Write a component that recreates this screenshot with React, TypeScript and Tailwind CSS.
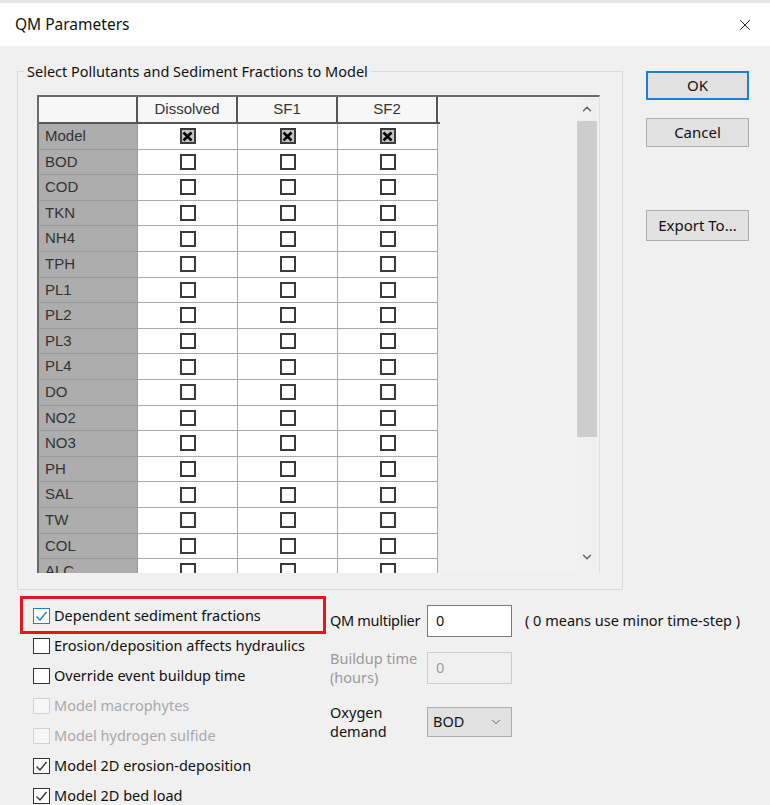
import { X, ChevronUp, ChevronDown } from 'lucide-react';

const ROWS = ['Model', 'BOD', 'COD', 'TKN', 'NH4', 'TPH', 'PL1', 'PL2', 'PL3', 'PL4', 'DO', 'NO2', 'NO3', 'PH', 'SAL', 'TW', 'COL', 'ALC'];
const COLS = ['Dissolved', 'SF1', 'SF2'];

const ui = { fontFamily: '"Noto Sans", "Open Sans", sans-serif' };
const grid = { fontFamily: '"Liberation Sans", Arial, sans-serif' };

function GridBox({ checked }: { checked: boolean }) {
  return (
    <div className={`w-[16px] h-[16px] border-[2px] border-[#3a3a3a] flex items-center justify-center ${checked ? 'bg-[#c4c4c4]' : 'bg-white'}`}>
      {checked && (
        <svg width="11" height="11" viewBox="0 0 11 11">
          <path d="M1.5 1.5 L9.5 9.5 M9.5 1.5 L1.5 9.5" stroke="#000" strokeWidth="2.6" />
        </svg>
      )}
    </div>
  );
}

function Check({ label, checked, disabled, focus }: { label: string; checked?: boolean; disabled?: boolean; focus?: boolean }) {
  const border = focus ? 'border-[#1a7fd6]' : disabled ? 'border-[#d2d2d2]' : 'border-[#333]';
  return (
    <div className="h-[30px] flex items-center gap-[4px] whitespace-nowrap">
      <div className={`w-[17px] h-[16px] shrink-0 border ${border} ${disabled ? 'bg-[#f6f6f6]' : 'bg-white'} flex items-center justify-center`}>
        {checked && (
          <svg width="13" height="12" viewBox="0 0 13 12">
            <path d="M1.5 6.5 L5 10 L11.5 2" fill="none" stroke={focus ? '#1a7fd6' : '#333'} strokeWidth="1.4" />
          </svg>
        )}
      </div>
      <span className={`text-[14.5px] ${disabled ? 'text-[#a8a8a8]' : 'text-[#111]'}`}>{label}</span>
    </div>
  );
}

function Button({ label, primary, className }: { label: string; primary?: boolean; className?: string }) {
  return (
    <div className={`w-[103px] flex items-center justify-center bg-[#e1e1e1] text-[15px] text-[#111] ${primary ? 'border-2 border-[#1a7fd6]' : 'border border-[#adadad]'} ${className ?? ''}`}>
      {label}
    </div>
  );
}

export default function App() {
  return (
    <div className="w-[770px] h-[805px] bg-[#f0f0f0] overflow-hidden" style={ui}>
      {/* Title bar */}
      <div className="h-[46px] bg-white flex items-center justify-between pl-[15px] pr-[16px] border-t-[3px] border-[#e6e6e6]">
        <span className="text-[15.5px] text-[#111]">QM Parameters</span>
        <X size={18} strokeWidth={1.3} className="text-[#222]" />
      </div>

      {/* Top area: group box + buttons */}
      <div className="flex pl-[17px] pt-[25px]">
        <div className="relative w-[606px] h-[519px] border border-[#dadada] pt-[23px] pl-[19px]">
          <span className="absolute left-[6px] top-[-11px] px-[3px] bg-[#f0f0f0] text-[14.5px] leading-[20px] text-[#111]">
            Select Pollutants and Sediment Fractions to Model
          </span>

          {/* List view */}
          <div className="w-[563px] h-[478px] flex border-t-2 border-l-2 border-[#6a6a6a] border-r border-r-[#e0e0e0] overflow-hidden" style={grid}>
            <div className="w-[401px] flex flex-col">
              <div className="h-[27px] flex shrink-0 bg-[#f7f7f7] border-b-2 border-[#555] text-[15px] text-[#333]">
                <div className="w-[99px] border-r-2 border-[#555]" />
                {COLS.map(c => (
                  <div key={c} className="w-[100px] border-r-2 border-[#555] flex items-center justify-center">{c}</div>
                ))}
              </div>
              {ROWS.map((r, i) => (
                <div key={r} className="h-[25.6px] flex shrink-0 text-[15px] text-[#333]">
                  <div className="w-[99px] bg-[#adadad] border-b border-r border-[#999] flex items-center pl-[6px]">{r}</div>
                  {COLS.map(c => (
                    <div key={c} className="w-[100px] bg-white border-b border-r border-[#a8a8a8] flex items-center justify-center">
                      <GridBox checked={i === 0} />
                    </div>
                  ))}
                </div>
              ))}
            </div>
            <div className="flex-1 bg-[#f2f2f2]" />
            {/* Scrollbar */}
            <div className="w-[20px] mr-[2px] bg-[#f0f0f0] flex flex-col items-center">
              <div className="h-[24px] flex items-center justify-center">
                <ChevronUp size={14} strokeWidth={2.4} className="text-[#606060]" />
              </div>
              <div className="w-[20px] h-[316px] bg-[#cdcdcd]" />
              <div className="flex-1" />
              <div className="h-[24px] flex items-center justify-center mb-[4px]">
                <ChevronDown size={14} strokeWidth={2.4} className="text-[#606060]" />
              </div>
            </div>
          </div>
        </div>

        <div className="ml-[23px] flex flex-col">
          <Button label="OK" primary className="h-[29px]" />
          <Button label="Cancel" className="h-[29px] mt-[18px]" />
          <Button label="Export To..." className="h-[31px] mt-[63px]" />
        </div>
      </div>

      {/* Bottom area */}
      <div className="flex mt-[5px]">
        <div className="relative w-[313px] shrink-0 pl-[33px] pt-[6px]">
          <div className="absolute left-[20px] top-[1px] w-[306px] h-[38px] border-[3px] border-[#e5151c]" />
          <Check label="Dependent sediment fractions" checked focus />
          <Check label="Erosion/deposition affects hydraulics" />
          <Check label="Override event buildup time" />
          <Check label="Model macrophytes" disabled />
          <Check label="Model hydrogen sulfide" disabled />
          <Check label="Model 2D erosion-deposition" checked />
          <Check label="Model 2D bed load" checked />
        </div>

        <div className="pl-[17px] pt-[10px] flex flex-col text-[14.5px]">
          <div className="flex items-center h-[32px]">
            <span className="w-[97px] text-[#111] tracking-[-0.3px]">QM multiplier</span>
            <div className="w-[85px] h-[32px] bg-white border border-[#7a7a7a] flex items-center pl-[8px] text-[#111]">0</div>
            <span className="ml-[13px] text-[#111]">( 0 means use minor time-step )</span>
          </div>
          <div className="flex items-center h-[32px] mt-[15px]">
            <span className="w-[97px] leading-[19px] text-[#9a9a9a]">Buildup time<br />(hours)</span>
            <div className="w-[85px] h-[32px] bg-[#f0f0f0] border border-[#cccccc] flex items-center pl-[8px] text-[#9a9a9a]">0</div>
          </div>
          <div className="flex items-center h-[30px] mt-[23px]">
            <span className="w-[97px] leading-[19px] text-[#111]">Oxygen<br />demand</span>
            <div className="w-[85px] h-[30px] bg-[#e1e1e1] border border-[#adadad] flex items-center justify-between pl-[5px] pr-[8px] text-[#111]">
              <span>BOD</span>
              <ChevronDown size={14} strokeWidth={1.3} className="text-[#444]" />
            </div>
          </div>
        </div>
      </div>
    </div>
  );
}
